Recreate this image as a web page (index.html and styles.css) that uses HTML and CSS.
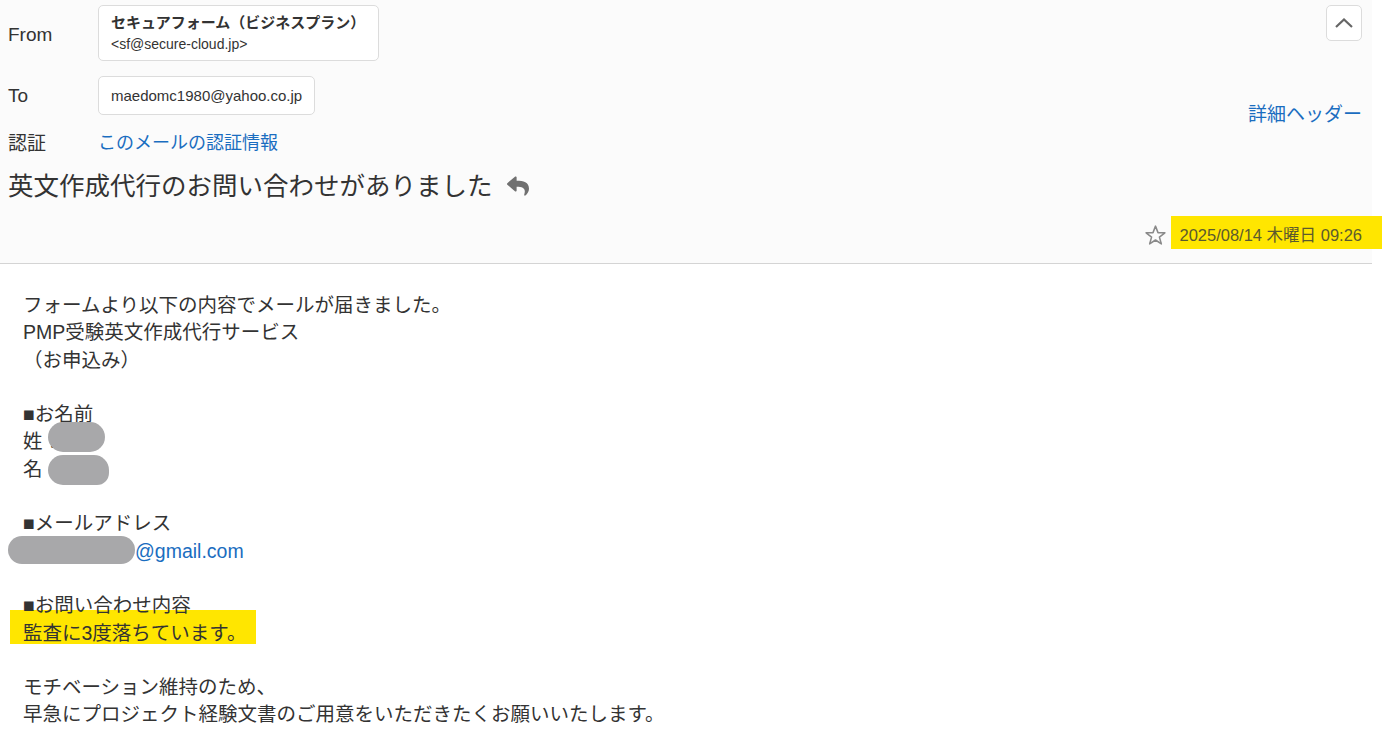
FILE: index.html
```html
<!DOCTYPE html>
<html lang="ja">
<head>
    <meta charset="UTF-8">
    <meta name="viewport" content="width=device-width, initial-scale=1.0">
    <title>英文作成代行のお問い合わせがありました</title>
    <link rel="stylesheet" href="styles.css">
</head>
<body>
    <div class="mail-header">
        <div class="top">
            <div class="fields">
                <div class="row row-from">
                    <span class="label">From</span>
                    <div class="addr-box from-box">
                        <div class="from-name">セキュアフォーム（ビジネスプラン）</div>
                        <div class="from-mail">&lt;sf@secure-cloud.jp&gt;</div>
                    </div>
                </div>
                <div class="row row-to">
                    <span class="label">To</span>
                    <div class="addr-box to-box">maedomc1980@yahoo.co.jp</div>
                </div>
                <div class="row row-auth">
                    <span class="label">認証</span>
                    <a href="#" class="link">このメールの認証情報</a>
                </div>
            </div>
            <div class="side">
                <button class="collapse-btn" title="閉じる">
                    <svg width="18" height="10" viewBox="0 0 18 10"><polyline points="1,9 9,1.5 17,9" fill="none" stroke="#666" stroke-width="2.2"/></svg>
                </button>
                <a href="#" class="link detail-link">詳細ヘッダー</a>
            </div>
        </div>
        <h1 class="subject">英文作成代行のお問い合わせがありました
            <svg class="reply-icon" width="22" height="22" viewBox="0 0 512 512"><path fill="#707070" d="M8.309 189.836L184.313 37.851C199.719 24.546 224 35.347 224 56.015v80.053c160.629 1.839 288 34.032 288 186.258 0 61.441-39.581 122.309-83.333 154.132-13.653 9.931-33.111-2.533-28.077-18.631 45.344-145.012-21.507-183.51-176.59-185.742V360c0 20.7-24.3 31.453-39.687 18.164l-176.004-152c-11.071-9.562-11.086-26.753 0-36.328z"/></svg>
        </h1>
        <div class="date-row">
            <svg class="star" width="23" height="23" viewBox="0 0 24 24"><polygon points="12,2.2 14.6,9 21.8,9.2 16.1,13.7 18.1,20.8 12,16.7 5.9,20.8 7.9,13.7 2.2,9.2 9.4,9" fill="none" stroke="#8a8a8a" stroke-width="1.6" stroke-linejoin="round"/></svg>
            <span class="date">2025/08/14 木曜日 09:26</span>
        </div>
    </div>

    <div class="mail-body">
        <div class="line">フォームより以下の内容でメールが届きました。</div>
        <div class="line">PMP受験英文作成代行サービス</div>
        <div class="line">（お申込み）</div>
        <div class="line"></div>
        <div class="line">■お名前</div>
        <div class="line redact">姓 ．<span class="blob blob-sei"></span></div>
        <div class="line redact">名 <span class="blob blob-mei"></span></div>
        <div class="line"></div>
        <div class="line">■メールアドレス</div>
        <div class="line"><span class="blob-mail"></span><a href="#" class="link">@gmail.com</a></div>
        <div class="line"></div>
        <div class="line on-top">■お問い合わせ内容</div>
        <div class="line"><span class="mark-text">監査に3度落ちています。</span></div>
        <div class="line"></div>
        <div class="line">モチベーション維持のため、</div>
        <div class="line">早急にプロジェクト経験文書のご用意をいただきたくお願いいたします。</div>
    </div>
</body>
</html>
```

FILE: styles.css
```css
body {
    margin: 0;
    font-family: "Liberation Sans", "Noto Sans CJK JP", sans-serif;
    color: #333;
    background: #fff;
}
a.link {
    color: #1a6dc0;
    text-decoration: none;
}
.mail-header {
    width: 1372px;
    height: 264px;
    box-sizing: border-box;
    padding: 5px 10px 0 8px;
    background: #fbfbfb;
    border-bottom: 1px solid #d4d4d4;
}
.top {
    display: flex;
    justify-content: space-between;
}
.row {
    display: flex;
    align-items: center;
}
.label {
    width: 90px;
    font-size: 19px;
    color: #333;
}
.addr-box {
    background: #fff;
    border: 1px solid #dcdcdc;
    border-radius: 5px;
    box-sizing: border-box;
    padding: 0 12px;
}
.row-from {
    height: 56px;
}
.row-from .label {
    margin-top: 3px;
}
.from-box {
    width: 281px;
    height: 56px;
    padding-top: 6px;
}
.from-name {
    font-size: 15px;
    font-weight: bold;
    line-height: 22px;
    color: #333;
}
.from-mail {
    font-size: 14px;
    line-height: 20px;
    color: #333;
}
.row-to {
    margin-top: 15px;
    height: 39px;
}
.to-box {
    height: 39px;
    line-height: 37px;
    font-size: 15px;
}
.row-auth {
    margin-top: 14px;
    height: 24px;
}
.row-auth .link {
    font-size: 18px;
}
.side {
    display: flex;
    flex-direction: column;
    align-items: flex-end;
}
.collapse-btn {
    width: 36px;
    height: 36px;
    background: #fff;
    border: 1px solid #dcdcdc;
    border-radius: 5px;
    display: flex;
    align-items: center;
    justify-content: center;
    padding: 0;
    cursor: pointer;
}
.detail-link {
    margin-top: 62px;
    font-size: 19px;
    line-height: 24px;
}
.subject {
    margin: 15px 0 0;
    font-size: 25.5px;
    font-weight: normal;
    line-height: 36px;
    color: #333;
    display: flex;
    align-items: center;
}
.reply-icon {
    margin-left: 14px;
}
.date-row {
    margin-top: 14px;
    display: flex;
    justify-content: flex-end;
    align-items: center;
    height: 34px;
}
.star {
    margin-right: 12px;
}
.date {
    position: relative;
    font-size: 16.5px;
    line-height: 20px;
    color: #5c5a2e;
    z-index: 0;
}
.date::before {
    content: "";
    position: absolute;
    left: -8px;
    right: -20px;
    top: -9px;
    bottom: -4px;
    background: #ffe600;
    z-index: -1;
}
.mail-body {
    padding: 28px 0 0 23px;
    font-size: 19.5px;
    line-height: 27.3px;
    color: #333;
}
.line {
    min-height: 27.3px;
}
.on-top {
    position: relative;
    z-index: 1;
}
.redact {
    position: relative;
}
.blob {
    position: absolute;
    background: #a8a8aa;
}
.blob-sei {
    left: 25px;
    top: -6px;
    width: 57px;
    height: 30px;
    border-radius: 15px;
}
.blob-mei {
    left: 25px;
    top: -1px;
    width: 61px;
    height: 30px;
    border-radius: 15px 15px 12px 15px;
}
.blob-mail {
    display: inline-block;
    vertical-align: middle;
    width: 127px;
    height: 28px;
    margin: -6px 0 0 -15px;
    border-radius: 14px;
    background: #a8a8aa;
}
.mark-text {
    position: relative;
    z-index: 0;
}
.mark-text::before {
    content: "";
    position: absolute;
    left: -13px;
    right: -10px;
    top: -12px;
    bottom: 0;
    background: #ffe600;
    z-index: -1;
}
```
